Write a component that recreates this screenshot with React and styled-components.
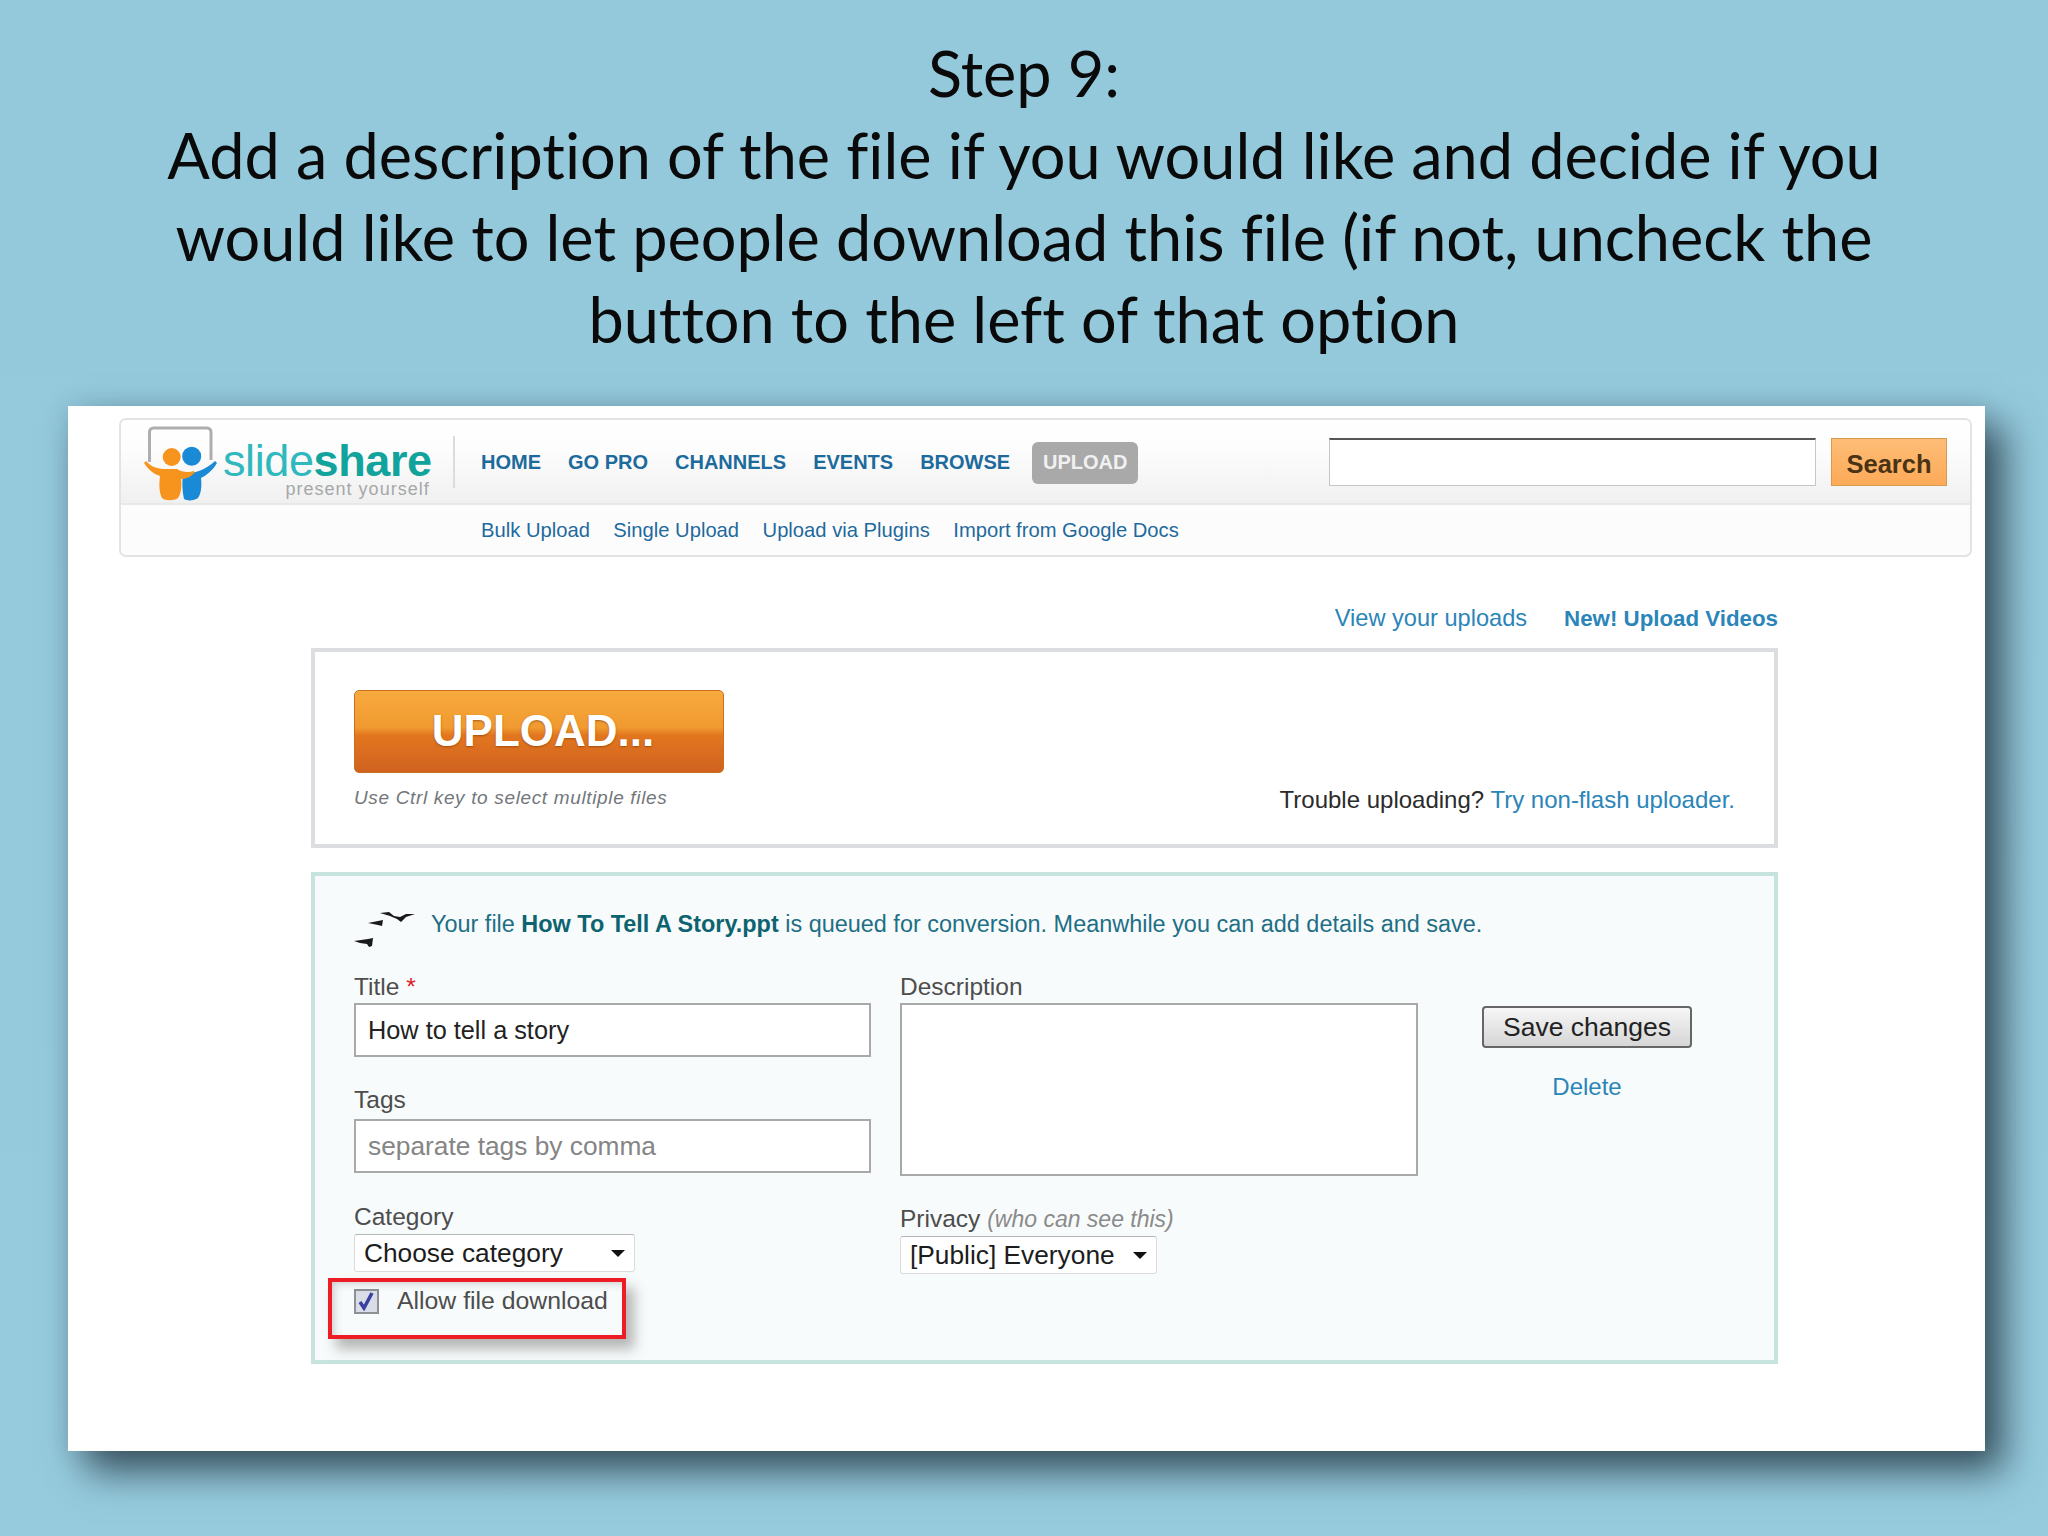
import React from "react";
import styled, { createGlobalStyle } from "styled-components";

const Global = createGlobalStyle`
  html, body {
    margin: 0;
    padding: 0;
  }
  body {
    width: 2048px;
    height: 1536px;
    overflow: hidden;
    background: #95cadd;
    font-family: "Liberation Sans", Arial, sans-serif;
  }
  * {
    box-sizing: border-box;
  }
`;

const Page = styled.div`
  width: 2048px;
  height: 1536px;
  background: linear-gradient(180deg, #94c9dc 0%, #96cbde 100%);
`;

const Heading = styled.h1`
  margin: 0;
  height: 406px;
  padding-top: 32px;
  font-family: Lato, "Open Sans", sans-serif;
  font-weight: 400;
  font-size: 63px;
  line-height: 82px;
  font-variant-ligatures: none;
  text-align: center;
  color: #0a0a0a;
`;

const HeadingLine = styled.div`
  white-space: nowrap;
`;

const Slide = styled.div`
  width: 1917px;
  height: 1045px;
  margin-left: 68px;
  padding: 12px 13px 0 51px;
  background: #fff;
  box-shadow: 18px 20px 36px rgba(20, 35, 45, 0.72), 0 0 22px rgba(30, 60, 80, 0.12);
`;

const Header = styled.div`
  height: 139px;
  border: 2px solid #e3e3e3;
  border-radius: 7px;
  overflow: hidden;
`;

const TopBar = styled.div`
  display: flex;
  align-items: center;
  height: 85px;
  padding: 0 23px 0 22px;
  background: linear-gradient(180deg, #fff 0%, #fdfdfd 35%, #f0f0f0 100%);
  border-bottom: 2px solid #e8e8e8;
`;

const Logo = styled.div`
  display: flex;
  align-items: center;
  width: 312px;
  height: 52px;
  border-right: 2px solid #dcdcdc;
  flex: none;
`;

const LogoMark = styled.svg`
  width: 76px;
  height: 76px;
  margin-top: 4px;
  flex: none;
`;

const LogoWords = styled.div`
  display: flex;
  flex-direction: column;
  align-items: flex-end;
  margin: 13px 0 0 4px;
`;

const Wordmark = styled.div`
  font-size: 45px;
  line-height: 42px;
  color: #2fb8bd;
  letter-spacing: -0.4px;
  b {
    color: #12a39c;
    font-weight: 700;
  }
`;

const Tagline = styled.div`
  margin-right: 2px;
  font-size: 18px;
  line-height: 14px;
  letter-spacing: 1px;
  color: #a5a8a8;
`;

const Nav = styled.nav`
  display: flex;
  align-items: center;
  gap: 27px;
  margin: 2px 0 0 26px;
`;

const NavLink = styled.a`
  font-size: 20px;
  font-weight: 700;
  color: #1d6a9c;
  white-space: nowrap;
`;

const UploadPill = styled.a`
  width: 106px;
  height: 42px;
  margin-left: -5px;
  border-radius: 6px;
  background: #a9a9a9;
  color: #f1f1f1;
  font-size: 20px;
  font-weight: 700;
  line-height: 40px;
  text-align: center;
`;

const SearchBox = styled.div`
  width: 487px;
  height: 48px;
  margin-left: auto;
  background: #fff;
  border: 1px solid #c6c6c6;
  border-top: 2px solid #555;
`;

const SearchButton = styled.div`
  width: 116px;
  height: 48px;
  margin-left: 15px;
  background: linear-gradient(180deg, #fdbd76 0%, #fdaa58 100%);
  border: 1px solid #d89a4e;
  color: #4a3214;
  font-size: 25.5px;
  font-weight: 700;
  line-height: 51px;
  text-align: center;
`;

const SubBar = styled.div`
  display: flex;
  align-items: center;
  gap: 23.5px;
  height: 49px;
  padding: 2px 0 0 360px;
  background: #fdfcfd;
`;

const SubLink = styled.a`
  font-size: 20.2px;
  color: #1d6a9c;
  white-space: nowrap;
`;

const Content = styled.div`
  width: 1467px;
  margin-left: 192px;
`;

const TopLinks = styled.div`
  display: flex;
  justify-content: flex-end;
  gap: 37px;
  height: 91px;
  padding-top: 48px;
`;

const TopLink = styled.a`
  font-size: ${(p) => (p.$bold ? 22.3 : 23.6)}px;
  line-height: 27px;
  font-weight: ${(p) => (p.$bold ? 700 : 400)};
  color: #2b85b8;
  white-space: nowrap;
`;

const UploadBox = styled.div`
  display: flex;
  justify-content: space-between;
  align-items: flex-end;
  height: 200px;
  padding: 39px 39px 31px 39px;
  border: 4px solid #dcdde0;
`;

const UploadLeft = styled.div`
  display: flex;
  flex-direction: column;
  gap: 14px;
  margin-bottom: 4px;
`;

const BigUpload = styled.div`
  width: 370px;
  height: 83px;
  padding-left: 8px;
  border-radius: 5px;
  border: 1px solid #c9701f;
  background: linear-gradient(180deg, #f8aa3e 0%, #f09a30 45%, #e2761f 55%, #d0621f 100%);
  color: #fff;
  font-size: 44px;
  font-weight: 700;
  line-height: 80px;
  text-align: center;
  text-shadow: 0 1px 2px rgba(120, 50, 0, 0.6);
`;

const Hint = styled.div`
  font-size: 19px;
  font-style: italic;
  line-height: 22px;
  letter-spacing: 0.65px;
  color: #73767c;
`;

const Trouble = styled.div`
  font-size: 24px;
  line-height: 27px;
  color: #2b2b2b;
  a {
    color: #2b85b8;
  }
`;

const DetailsBox = styled.div`
  height: 492px;
  margin-top: 24px;
  padding: 30px 39px 0 39px;
  background: #f8fbfb;
  border: 4px solid #c6e4dd;
`;

const Notice = styled.div`
  display: flex;
  align-items: center;
  gap: 15px;
  height: 44px;
  font-size: 23.45px;
  color: #1e6f85;
  white-space: nowrap;
  span {
    margin-bottom: 8px;
  }
  b {
    color: #0d6470;
  }
`;

const Birds = styled.svg`
  width: 62px;
  height: 44px;
  flex: none;
`;

const FormGrid = styled.div`
  display: grid;
  grid-template-columns: 517px 518px 1fr;
  column-gap: 29px;
  margin-top: 24px;
`;

const Column = styled.div`
  display: flex;
  flex-direction: column;
`;

const Label = styled.div`
  height: ${(p) => p.$height || 29}px;
  margin-top: ${(p) => p.$top || 0}px;
  font-size: 24.5px;
  line-height: 25px;
  color: #4d4d4d;
  white-space: nowrap;
  em {
    font-size: 23px;
    color: #8a8a8a;
  }
  b {
    font-weight: 400;
    color: #d22;
  }
`;

const Field = styled.div`
  width: 100%;
  height: ${(p) => p.$height || 54}px;
  padding: 0 12px;
  background: #fff;
  border: 2px solid #a9a9a9;
  font-size: ${(p) => (p.$placeholder ? 26.3 : 25.3)}px;
  line-height: 50px;
  color: ${(p) => (p.$placeholder ? "#858585" : "#222")};
  white-space: nowrap;
`;

const Select = styled.div`
  display: flex;
  align-items: center;
  justify-content: space-between;
  width: ${(p) => p.$width}px;
  height: 38px;
  padding: 0 7px 0 9px;
  background: #fff;
  border: 1px solid #dcdcdc;
  border-top-color: #b5b5b5;
  border-radius: 3px;
  font-size: 26.3px;
  color: #1c1c1c;
  white-space: nowrap;
`;

const Caret = styled.span`
  width: 0;
  height: 0;
  margin-right: 2px;
  border-left: 7px solid transparent;
  border-right: 7px solid transparent;
  border-top: 7px solid #111;
`;

const CheckRow = styled.div`
  position: relative;
  display: flex;
  align-items: center;
  gap: 18px;
  height: 26px;
  margin-top: 16px;
  font-size: 24.8px;
  color: #4d4d4d;
  white-space: nowrap;
`;

const CheckBox = styled.span`
  display: flex;
  align-items: center;
  justify-content: center;
  width: 25px;
  height: 25px;
  background: #d9dde8;
  border: 2px solid #8e9096;
  flex: none;
`;

const RedBox = styled.div`
  position: absolute;
  left: -26px;
  top: -10px;
  width: 298px;
  height: 61px;
  border: 4px solid #ee1c25;
  box-shadow: 8px 10px 12px rgba(60, 60, 60, 0.36), inset 5px 4px 8px -3px rgba(60, 60, 60, 0.25);
`;

const SaveColumn = styled.div`
  display: flex;
  flex-direction: column;
  align-items: center;
  width: 210px;
  margin: 32px 0 0 35px;
`;

const SaveButton = styled.div`
  width: 210px;
  height: 42px;
  border: 2px solid #666;
  border-radius: 4px;
  background: linear-gradient(180deg, #f6f6f6 0%, #d6d6d6 100%);
  font-size: 26.5px;
  line-height: 38px;
  color: #222;
  text-align: center;
  white-space: nowrap;
`;

const DeleteLink = styled.a`
  margin-top: 25px;
  font-size: 24px;
  line-height: 27px;
  color: #2b85b8;
`;

const LogoIcon = () => (
  <LogoMark viewBox="0 0 76 76">
    <path d="M6.5 36V6a4 4 0 0 1 4-4H64a4 4 0 0 1 4 4v28" fill="none" stroke="#aeaeae" strokeWidth="3" />
    <path d="M40 47C48 48 62 45 72 35L74 37C70 44 64 49 58 52C59 60 58 68 55 72C51 75 44 75 41 73C39 65 39 55 40 47z" fill="#1b8ad6" />
    <circle cx="48.7" cy="30.3" r="9.5" fill="#1b8ad6" />
    <path d="M1 37L3 35C8 41 15 43 22 43L34 43C38 46 46 47 50 45L52 46C48 51 43 53 38 53C39 60 38 68 35 72C31 75 22 75 19 72C16 66 16 58 17 50C10 48 5 43 1 37z" fill="#f7941e" />
    <circle cx="28.7" cy="31" r="9" fill="#f7941e" />
  </LogoMark>
);

const BirdsIcon = () => (
  <Birds viewBox="0 0 62 44">
    <path d="M0 35L14 33L19 32L18 40L15 41L13 38L6 37z" fill="#1a1a1a" />
    <path d="M14 17L24 15L29 14L28 20L24 19z" fill="#1a1a1a" />
    <path d="M26 7L35 6L40 10L46 11L52 8L61 8L52 11L47 16L43 13L36 10z" fill="#1a1a1a" />
  </Birds>
);

export default function App() {
  return (
    <>
      <Global />
      <Page>
        <Heading>
          <HeadingLine>Step 9:</HeadingLine>
          <HeadingLine>Add a description of the file if you would like and decide if you</HeadingLine>
          <HeadingLine>would like to let people download this file (if not, uncheck the</HeadingLine>
          <HeadingLine>button to the left of that option</HeadingLine>
        </Heading>
        <Slide>
          <Header>
            <TopBar>
              <Logo>
                <LogoIcon />
                <LogoWords>
                  <Wordmark>
                    slide<b>share</b>
                  </Wordmark>
                  <Tagline>present yourself</Tagline>
                </LogoWords>
              </Logo>
              <Nav>
                <NavLink>HOME</NavLink>
                <NavLink>GO PRO</NavLink>
                <NavLink>CHANNELS</NavLink>
                <NavLink>EVENTS</NavLink>
                <NavLink>BROWSE</NavLink>
                <UploadPill>UPLOAD</UploadPill>
              </Nav>
              <SearchBox />
              <SearchButton>Search</SearchButton>
            </TopBar>
            <SubBar>
              <SubLink>Bulk Upload</SubLink>
              <SubLink>Single Upload</SubLink>
              <SubLink>Upload via Plugins</SubLink>
              <SubLink>Import from Google Docs</SubLink>
            </SubBar>
          </Header>
          <Content>
            <TopLinks>
              <TopLink>View your uploads</TopLink>
              <TopLink $bold>New! Upload Videos</TopLink>
            </TopLinks>
            <UploadBox>
              <UploadLeft>
                <BigUpload>UPLOAD...</BigUpload>
                <Hint>Use Ctrl key to select multiple files</Hint>
              </UploadLeft>
              <Trouble>
                Trouble uploading? <a>Try non-flash uploader.</a>
              </Trouble>
            </UploadBox>
            <DetailsBox>
              <Notice>
                <BirdsIcon />
                <span>
                  Your file <b>How To Tell A Story.ppt</b> is queued for conversion. Meanwhile you can add details and save.
                </span>
              </Notice>
              <FormGrid>
                <Column>
                  <Label>
                    Title <b>*</b>
                  </Label>
                  <Field>How to tell a story</Field>
                  <Label $top={30} $height={32}>Tags</Label>
                  <Field $placeholder>separate tags by comma</Field>
                  <Label $top={31} $height={30}>Category</Label>
                  <Select $width={281}>
                    Choose category
                    <Caret />
                  </Select>
                  <CheckRow>
                    <CheckBox>
                      <svg width="17" height="19" viewBox="0 0 17 19">
                        <path d="M2 10l4 6 8-15" fill="none" stroke="#3b3f9e" strokeWidth="3.5" />
                      </svg>
                    </CheckBox>
                    Allow file download
                    <RedBox />
                  </CheckRow>
                </Column>
                <Column>
                  <Label>Description</Label>
                  <Field $height={173} />
                  <Label $top={30} $height={30}>
                    Privacy <em>(who can see this)</em>
                  </Label>
                  <Select $width={257}>
                    [Public] Everyone
                    <Caret />
                  </Select>
                </Column>
                <SaveColumn>
                  <SaveButton>Save changes</SaveButton>
                  <DeleteLink>Delete</DeleteLink>
                </SaveColumn>
              </FormGrid>
            </DetailsBox>
          </Content>
        </Slide>
      </Page>
    </>
  );
}
